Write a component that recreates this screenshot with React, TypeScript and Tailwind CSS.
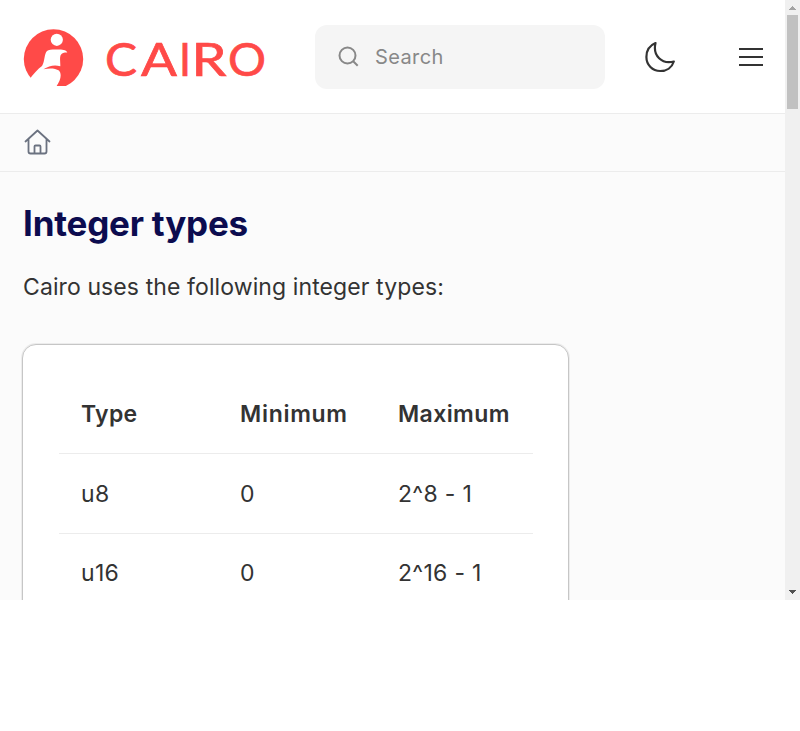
const rows = [
  ["u8", "0", "2^8 - 1"],
  ["u16", "0", "2^16 - 1"],
];

function Logo() {
  return (
    <svg className="mt-px block shrink-0" width="244" height="57" viewBox="23 29 244 57" fill="#ff4a48">
      <circle cx="53.5" cy="59" r="29.7" />
      <circle cx="56.8" cy="39.8" r="6.1" fill="#fff" />
      <path fill="#fff" d="M29 80C33 74 38 69 42 66C45 61 44 54 47 51C49 49.3 53 49.500 58 49.500C62 49.500 66 49.500 67.300 52.500C64 52.500 61.500 53 60.500 55.500C59.500 59 60.500 62 60.300 66.300C55 64.500 49 65.500 43.500 69.300C49 68 55 68 59 70.500C62.500 75 60 81 56 87H29Z" />
      <g fontFamily="Lato, sans-serif" fontSize="46" stroke="#ff4a48" strokeWidth="0.7">
        <text x="105" y="75.500" textLength="32" lengthAdjust="spacingAndGlyphs">C</text>
        <text x="141" y="75.500" textLength="36" lengthAdjust="spacingAndGlyphs">A</text>
        <text x="179" y="75.500" textLength="12" lengthAdjust="spacingAndGlyphs">I</text>
        <text x="191.500" y="75.500" textLength="35" lengthAdjust="spacingAndGlyphs">R</text>
        <text x="228" y="75.500" textLength="38" lengthAdjust="spacingAndGlyphs">O</text>
      </g>
    </svg>
  );
}

export default function App() {
  return (
    <div className="h-[731px] w-[800px] overflow-hidden bg-white font-['Inter',sans-serif] text-[#333]">
      <div className="flex h-[600px] overflow-hidden">
        <div className="flex w-[785px] flex-col bg-[#fbfbfb]">
          <header className="flex h-[114px] shrink-0 items-center border-b border-[#ececec] bg-white pl-[23px]">
            <Logo />
            <div className="ml-12 flex h-16 w-[290px] items-center rounded-xl bg-[#f5f5f5] pl-[23px] text-[#888]">
              <svg width="21" height="21" viewBox="0 0 21 21" fill="none" stroke="currentColor" strokeWidth="2">
                <circle cx="9.500" cy="9.500" r="8" />
                <path d="M15.200 15.200l4.500 4.500" />
              </svg>
              <span className="ml-4 text-[20px] tracking-[0.4px]">Search</span>
            </div>
            <svg className="ml-10" width="30" height="32" viewBox="0 0 30 32" fill="none" stroke="#333" strokeWidth="2.200" strokeLinejoin="round">
              <path d="M10.500 2C4.500 4.500 1.400 10 1.400 16C1.400 24 7.500 30 15.200 30C21.500 30 27 26.500 28.800 20.500C17 23.500 7.500 15 10.500 2Z" />
            </svg>
            <div className="ml-16 flex w-6 flex-col gap-1.5">
              <i className="h-0.5 bg-[#333]" />
              <i className="h-0.5 bg-[#333]" />
              <i className="h-0.5 bg-[#333]" />
            </div>
          </header>
          <nav className="flex h-[58px] shrink-0 items-center border-b border-[#ececec] pb-0.5 pl-6">
            <svg width="27" height="26" viewBox="0 0 27 26" fill="none" stroke="#6b7280" strokeWidth="1.800" strokeLinecap="round" strokeLinejoin="round">
              <path d="M1.500 12.500L13.500 1.500L25.500 12.500M4.500 10V22.500Q4.500 24.500 6.500 24.500H20.500Q22.500 24.500 22.500 22.500V10M10.500 24V17.500Q10.500 16.500 11.500 16.500H15.500Q16.500 16.500 16.500 17.500V24" />
            </svg>
          </nav>
          <main className="pl-[22px] pt-[29px]">
            <h1 className="pl-px text-[35px] font-bold leading-[44px] tracking-[-0.2px] text-[#0c0c4f]">Integer types</h1>
            <p className="mt-6 pl-px text-[23px] leading-9 tracking-[0.1px]">Cairo uses the following integer types:</p>
            <div className="mt-[39px] h-[400px] w-[547px] rounded-[14px] border border-[#c6c6c6] bg-white px-9 pt-[29px] shadow-[0_0_0_1px_#ececec]">
              <table className="w-[474px] table-fixed text-left text-[23px] leading-9 tracking-[0.3px]">
                <thead>
                  <tr className="h-[79px] border-b border-[#ececec]">
                    <th className="pl-[22px] pt-px font-semibold">Type</th>
                    <th className="pl-[23px] pt-px font-semibold tracking-[0.7px]">Minimum</th>
                    <th className="pl-[23px] pt-px font-semibold tracking-[0.4px]">Maximum</th>
                  </tr>
                </thead>
                <tbody>
                  {rows.map((row) => (
                    <tr key={row[0]} className="h-20 border-b border-[#ececec] first:[&>td]:pt-0.5">
                      {row.map((cell, i) => <td key={i} className={i ? "pl-[23px]" : "pl-[22px]"}>{cell}</td>)}
                    </tr>
                  ))}
                </tbody>
              </table>
            </div>
          </main>
        </div>
        <aside className="flex w-[15px] flex-col items-center bg-[#f0f0f0]">
          <svg className="shrink-0" width="15" height="15" shapeRendering="crispEdges"><path d="M4 10L7.500 6L11 10Z" fill="#a3a3a3" /></svg>
          <div className="h-[94px] w-[11px] shrink-0 bg-[#c1c1c1]" />
          <svg className="mt-auto shrink-0" width="15" height="15" shapeRendering="crispEdges"><path d="M4 5L7.500 9L11 5Z" fill="#505050" /></svg>
        </aside>
      </div>
    </div>
  );
}
